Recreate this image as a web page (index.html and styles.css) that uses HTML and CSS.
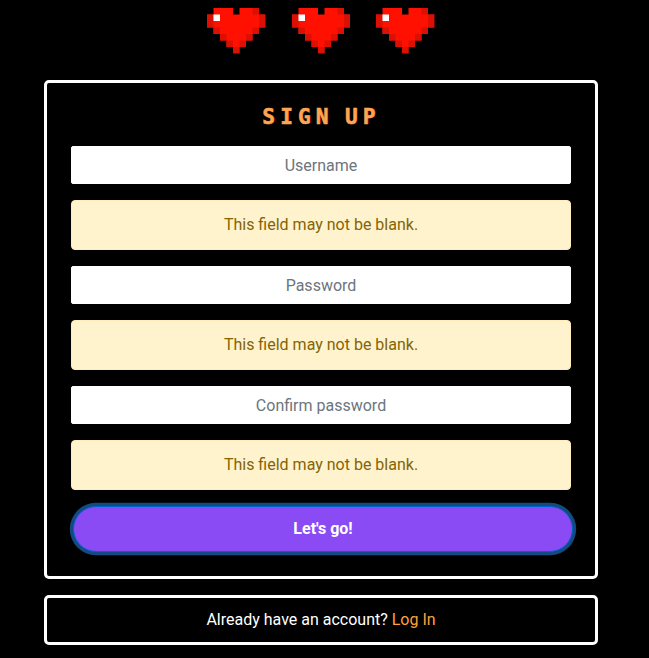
FILE: index.html
```
<!DOCTYPE html>
<html lang="en">
<head>
<meta charset="utf-8">
<title>Sign up</title>
<link rel="stylesheet" href="styles.css">
</head>
<body>
<svg class="defs" width="0" height="0" aria-hidden="true">
  <symbol id="heart" viewBox="0 0 9 7">
    <path fill="#ff1000" d="M1 0h3v1h1V0h3v1h1v2H8v1H7v1H6v1H5v1H4V6H3V5H2V4H1V3H0V1h1z"/>
    <path fill="#db1003" d="M7 0h1v1H7zM0 1h1v2H0zM8 1h1v2H8zM1 3h1v1H1zM7 3h1v1H7zM2 4h1v1H2zM6 4h1v1H6zM3 5h1v1H3zM5 5h1v1H5zM4 6h1v1H4z"/>
    <path fill="#fff" d="M1 1h1v1H1z"/>
  </symbol>
</svg>
<main class="page">
  <div class="hearts">
    <svg class="heart"><use href="#heart"/></svg>
    <svg class="heart"><use href="#heart"/></svg>
    <svg class="heart"><use href="#heart"/></svg>
  </div>
  <form class="card signup">
    <h1 class="title">SIGN UP</h1>
    <input class="field" type="text" placeholder="Username">
    <div class="alert">This field may not be blank.</div>
    <input class="field" type="password" placeholder="Password">
    <div class="alert">This field may not be blank.</div>
    <input class="field" type="password" placeholder="Confirm password">
    <div class="alert">This field may not be blank.</div>
    <button class="submit" type="button">Let's go!</button>
  </form>
  <div class="card login">Already have an account? <a class="link" href="#">Log In</a></div>
</main>
</body>
</html>
```
FILE: styles.css
```
* { box-sizing: border-box; }
body {
  margin: 0;
  background: #000;
  color: #fff;
  font: 16px/24px Roboto, sans-serif;
  overflow: hidden;
}
.defs { position: absolute; }
.page {
  width: 554px;
  margin-left: 44px;
}
.hearts {
  display: flex;
  justify-content: center;
  gap: 25.8px;
  height: 80px;
  padding-top: 8.3px;
}
.heart {
  width: 58.5px;
  height: 45.5px;
}
.card {
  border: 3px solid #fff;
  border-radius: 5px;
  text-align: center;
}
.signup {
  display: flex;
  flex-direction: column;
  gap: 16px;
  height: 499px;
  padding: 21px 24px;
}
.title {
  height: 26px;
  margin: 0 0 0 1px;
  color: #ffa552;
  font: bold 21px/26px "DejaVu Sans Mono", monospace;
  letter-spacing: 5.2px;
  word-spacing: -6.5px;
  -webkit-text-stroke: 0.5px #ffa552;
  text-shadow: 0.6px 0.3px 0 #a52208;
}
.field {
  width: 100%;
  height: 38px;
  padding: 6px 12px;
  border: 1px solid #fff;
  border-radius: 2px;
  background: #fff;
  font: inherit;
  text-align: center;
}
.field::placeholder {
  color: #6c757d;
  opacity: 1;
}
.alert {
  height: 50px;
  padding: 12px 20px;
  border: 1px solid #ffeeba;
  border-radius: 4px;
  background: #fff3cd;
  color: #856404;
}
.submit {
  width: 500px;
  height: 46px;
  margin-left: 2px;
  padding: 0;
  border: 1px solid #0062cc;
  border-radius: 25px;
  background: #8a4bf4;
  box-shadow: 0 0 0 3.2px #134b80;
  color: #fff;
  font: bold 16px/24px Roboto, sans-serif;
}
.login {
  height: 50px;
  margin-top: 16px;
  padding: 10px 0;
}
.link {
  color: #ffa13d;
  text-decoration: none;
}
```
